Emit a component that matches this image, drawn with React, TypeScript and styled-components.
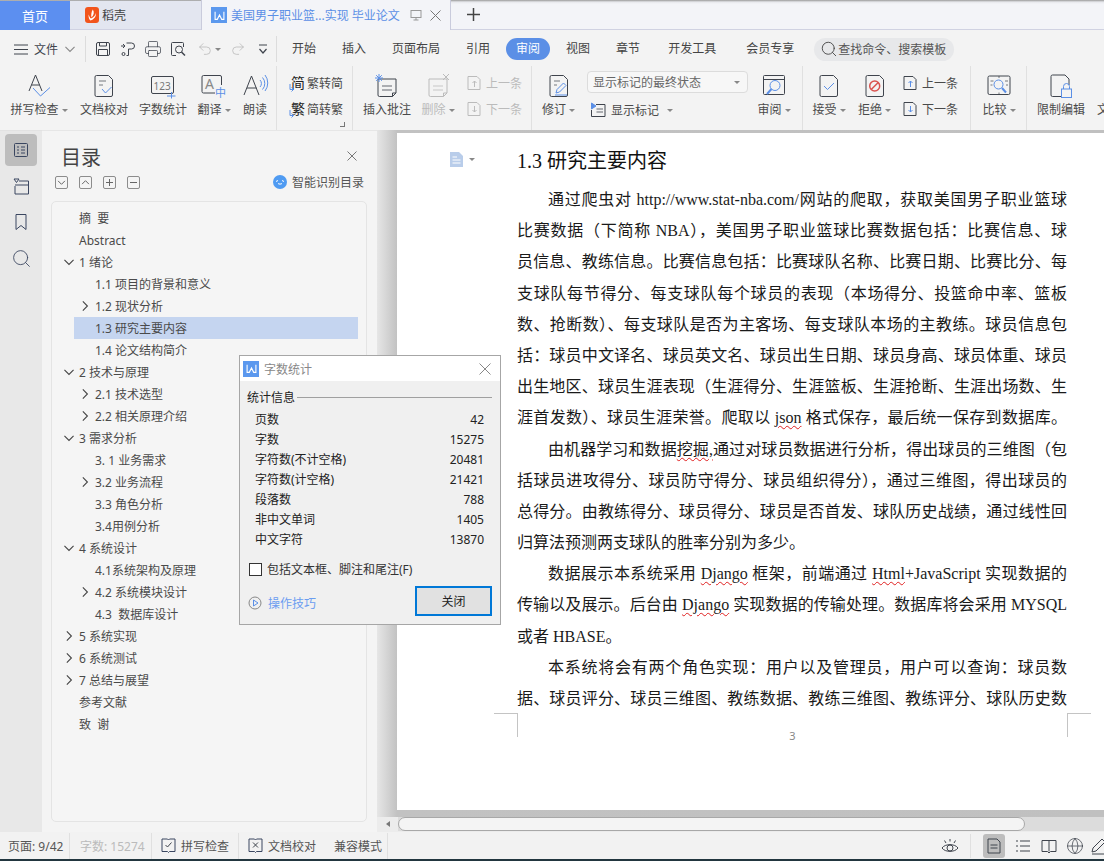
import React from "react";
import styled, { createGlobalStyle } from "styled-components";
import { Globe, Printer, Redo2, Search, Undo2 } from "lucide-react";

const INK = "#3f444d";
const BLUE = "#5b8fe6";
const UI_FONT = `"Noto Sans", "Noto Sans CJK SC", sans-serif`;

const GlobalStyle = createGlobalStyle`
  html, body { margin: 0; padding: 0; background: #f3f3f3; }
  * { box-sizing: border-box; }
`;

const Screen = styled.div`
  position: relative;
  width: 1104px;
  height: 861px;
  overflow: hidden;
  display: flex;
  flex-direction: column;
  font-family: ${UI_FONT};
  font-size: 12px;
  color: #4a4a4a;
  background: #f3f3f3;
`;

/* ---------- tabs ---------- */

const TabBar = styled.div`
  display: flex;
  height: 30px;
  flex-shrink: 0;
  background: linear-gradient(#9a9a9a 0, #e6e7ec 2px, #f3f4f8 4px);
  border-bottom: 1px solid #d0d2e2;
`;

const HomeTab = styled.div`
  width: 70px;
  display: flex;
  align-items: center;
  justify-content: center;
  color: #fff;
  font-size: 13px;
  background: #5c8ff0;
  margin-top: 1px;
  margin-bottom: -1px;
`;

const ShellTab = styled.div`
  width: 131px;
  display: flex;
  align-items: center;
  gap: 3px;
  padding-left: 15px;
  background: #e3e6f0;
  color: #444;
  font-size: 12px;
  margin-top: 1px;
`;

const DocTab = styled.div`
  width: 250px;
  display: flex;
  align-items: center;
  padding-left: 9px;
  margin-bottom: -1px;
  background: #f3f4f8;
  border-left: 1px solid #c9cbdc;
  border-right: 1px solid #c9cbdc;
`;

const DocTabTitle = styled.span`
  margin: 0 9px 0 4px;
  width: 170px;
  color: #5b8fe6;
  font-size: 12px;
  white-space: nowrap;
`;

const NewTab = styled.div`
  margin-left: 16px;
  display: flex;
  align-items: center;
  color: #444;
`;

const WordBadge = styled.span<{ $size: number }>`
  width: ${(p) => p.$size}px;
  height: ${(p) => p.$size}px;
  flex-shrink: 0;
  display: flex;
  align-items: center;
  justify-content: center;
  background: #5b98ee;
`;

/* ---------- menu row ---------- */

const MenuRow = styled.div`
  display: flex;
  align-items: center;
  height: 36px;
  flex-shrink: 0;
  padding: 2px 0 0 14px;
  background: #f3f3f3;
`;

const Slot = styled.span<{ $ml?: number }>`
  display: flex;
  align-items: center;
  flex-shrink: 0;
  margin-left: ${(p) => p.$ml ?? 0}px;
  color: ${INK};
`;

const MenuDivider = styled.span<{ $ml: number }>`
  width: 1px;
  height: 26px;
  margin-left: ${(p) => p.$ml}px;
  background: #dcdcdc;
`;

const MenuTab = styled.span<{ $active?: boolean; $wide?: boolean }>`
  height: 22px;
  line-height: 22px;
  padding: 0 ${(p) => (p.$active ? 10 : p.$wide ? 15 : 13)}px;
  margin: 0 ${(p) => (p.$active ? 3 : 0)}px;
  border-radius: 11px;
  white-space: nowrap;
  color: ${(p) => (p.$active ? "#fff" : "#444")};
  background: ${(p) => (p.$active ? BLUE : "transparent")};
`;

const SearchPill = styled.div`
  display: flex;
  align-items: center;
  width: 140px;
  height: 23px;
  margin-left: 5px;
  padding-left: 6px;
  border-radius: 12px;
  background: #e7e8ea;
  color: #555;
`;

/* ---------- ribbon ---------- */

const Ribbon = styled.div`
  display: flex;
  height: 64px;
  flex-shrink: 0;
  background: #f3f3f3;
  overflow: hidden;
`;

const Group = styled.div<{ $w: number; $pl?: number; $open?: boolean }>`
  display: flex;
  width: ${(p) => p.$w}px;
  flex-shrink: 0;
  padding: 4px 0 0 ${(p) => p.$pl ?? 0}px;
  border-right: ${(p) => (p.$open ? "none" : "1px solid #e0e0e0")};
  position: relative;
`;

const BigButton = styled.div<{ $w: number; $off?: boolean; $ml?: number }>`
  width: ${(p) => p.$w}px;
  margin-left: ${(p) => p.$ml ?? 0}px;
  flex-shrink: 0;
  display: flex;
  flex-direction: column;
  align-items: center;
  color: ${(p) => (p.$off ? "#bbb" : "#4a4a4a")};
`;

const IconBox = styled.div`
  height: 31px;
  display: flex;
  align-items: center;
  justify-content: center;
`;

const Label = styled.div`
  height: 18px;
  line-height: 18px;
  display: flex;
  align-items: center;
  white-space: nowrap;
`;

const Caret = styled.span<{ $ml?: number }>`
  width: 0;
  height: 0;
  margin-left: ${(p) => p.$ml ?? 3}px;
  border-left: 3px solid transparent;
  border-right: 3px solid transparent;
  border-top: 3px solid #888;
`;

const SmallStack = styled.div<{ $ml?: number }>`
  display: flex;
  flex-direction: column;
  gap: 8px;
  margin-top: 4px;
  margin-left: ${(p) => p.$ml ?? 0}px;
  flex-shrink: 0;
`;

const SmallButton = styled.div<{ $off?: boolean; $gap?: number }>`
  height: 18px;
  display: flex;
  align-items: center;
  gap: ${(p) => p.$gap ?? 4}px;
  white-space: nowrap;
  color: ${(p) => (p.$off ? "#bbb" : "#4a4a4a")};
`;

const CornerMark = styled.span`
  position: absolute;
  right: 7px;
  bottom: 3px;
  width: 5px;
  height: 5px;
  border-right: 1px solid #777;
  border-bottom: 1px solid #777;
`;

const MarkSelect = styled.div`
  width: 161px;
  height: 22px;
  margin-top: 1px;
  display: flex;
  align-items: center;
  justify-content: space-between;
  padding: 0 7px 0 5px;
  background: #f7f7f7;
  border: 1px solid #dcdcdc;
  border-radius: 4px;
  color: #666;
`;

const ColumnStack = styled.div`
  display: flex;
  flex-direction: column;
  gap: 8px;
  margin-left: 8px;
  flex-shrink: 0;
`;

/* ---------- body ---------- */

const Body = styled.div`
  flex: 1;
  display: flex;
  min-height: 0;
`;

const Rail = styled.div`
  width: 42px;
  flex-shrink: 0;
  display: flex;
  flex-direction: column;
  align-items: center;
  padding-top: 3px;
  gap: 4px;
  background: #e8e8e8;
  border-top: 1px solid #e2e2e2;
`;

const RailButton = styled.div<{ $active?: boolean }>`
  width: 32px;
  height: 32px;
  display: flex;
  align-items: center;
  justify-content: center;
  border-radius: 4px;
  background: ${(p) => (p.$active ? "#bdbdbd" : "transparent")};
`;

const Panel = styled.div`
  width: 335px;
  flex-shrink: 0;
  display: flex;
  flex-direction: column;
  background: #f4f4f4;
  border-top: 1px solid #e6e6e6;
`;

const PanelHeader = styled.div`
  display: flex;
  align-items: center;
  justify-content: space-between;
  height: 24px;
  margin-top: 13px;
  padding: 0 20px 0 19px;
`;

const PanelTitle = styled.h2`
  margin: 0;
  font-size: 20px;
  font-weight: 400;
  color: #444;
`;

const PanelTools = styled.div`
  display: flex;
  align-items: center;
  justify-content: space-between;
  height: 14px;
  margin-top: 7px;
  padding: 0 13px 0 13px;
`;

const ToolGroup = styled.div`
  display: flex;
  gap: 11px;
`;

const ToolButton = styled.span`
  width: 13px;
  height: 13px;
  display: flex;
  align-items: center;
  justify-content: center;
  border: 1px solid #8c8c8c;
  border-radius: 2px;
`;

const SmartLink = styled.span`
  display: flex;
  align-items: center;
  gap: 5px;
  color: #555;
`;

const TreeBox = styled.div`
  flex: 1;
  margin: 12px 10px 10px 9px;
  padding-top: 5px;
  background: #f5f5f5;
  border: 1px solid #e4e4e4;
  border-radius: 5px;
`;

const TreeRow = styled.div<{ $level: number; $active?: boolean }>`
  height: 22px;
  display: flex;
  align-items: center;
  margin: 0 8px 0 22px;
  padding-left: ${(p) => (p.$level === 1 ? 5 : 21)}px;
  white-space: pre;
  color: #4a4a4a;
  background: ${(p) => (p.$active ? "#c5d5f0" : "transparent")};
`;

const TreeArrow = styled.span<{ $level: number }>`
  width: 12px;
  margin-left: -16px;
  margin-right: 4px;
  display: flex;
`;

/* ---------- document ---------- */

const DocColumn = styled.div`
  flex: 1;
  min-width: 0;
  display: flex;
  flex-direction: column;
`;

const DocArea = styled.div`
  flex: 1;
  min-height: 0;
  padding: 3px 0 7px 20px;
  display: flex;
  background: linear-gradient(90deg, #e6e6e6 0, #c2c2c2 20px, #c0c0c0 100%);
`;

const Page = styled.div`
  flex: 1;
  padding-top: 11px;
  overflow: hidden;
  background: #fff;
`;

const HeadingRow = styled.div`
  display: flex;
  align-items: center;
  height: 30px;
`;

const MarginMark = styled.div`
  width: 120px;
  display: flex;
  align-items: center;
  gap: 6px;
  padding-left: 53px;
`;

const Heading = styled.h1`
  margin: 0;
  font-family: "Liberation Serif", "Noto Sans CJK SC", serif;
  font-size: 20px;
  font-weight: 400;
  color: #111;
`;

const DocBody = styled.div`
  margin-top: 10px;
  padding: 0 37px 0 120px;
  font-family: "Liberation Serif", "Noto Sans CJK SC", serif;
  font-size: 16px;
  line-height: 31.2px;
  color: #1a1a1a;
`;

const DocLine = styled.p<{ $indent?: boolean; $left?: boolean }>`
  margin: 0;
  height: 31.2px;
  text-indent: ${(p) => (p.$indent ? "31px" : 0)};
  text-align: ${(p) => (p.$left ? "left" : "justify")};
  text-align-last: ${(p) => (p.$left ? "left" : "justify")};
`;

const Wavy = styled.span`
  text-decoration: underline wavy #e02020 1px;
  text-underline-offset: 2px;
`;

const PageFoot = styled.div`
  display: flex;
  justify-content: space-between;
  margin-top: -1px;
  padding: 0 13px 0 97px;
`;

const CropMark = styled.span<{ $side: "left" | "right" }>`
  width: 24px;
  height: 24px;
  border-top: 1px solid #c4c4c4;
  border-${(p) => (p.$side === "left" ? "right" : "left")}: 1px solid #c4c4c4;
`;

const PageNumber = styled.span`
  align-self: flex-end;
  font-size: 11px;
  line-height: 12px;
  margin-bottom: -5px;
  color: #888;
`;

const ScrollRow = styled.div`
  height: 15px;
  flex-shrink: 0;
  display: flex;
  background: #dcdcdc;
  border-bottom: 1px solid #ececec;
`;

const ScrollArrow = styled.div`
  width: 21px;
  display: flex;
  align-items: center;
  justify-content: center;
  background: #ececec;
`;

const ArrowLeft = styled.span`
  width: 0;
  height: 0;
  border-top: 3px solid transparent;
  border-bottom: 3px solid transparent;
  border-right: 4px solid #777;
`;

const ScrollThumb = styled.div`
  width: 627px;
  background: #f4f4f4;
  border: 1px solid #a8a8a8;
  border-radius: 8px;
`;

/* ---------- status bar ---------- */

const StatusBar = styled.div`
  height: 29px;
  flex-shrink: 0;
  display: flex;
  align-items: center;
  background: #f2f2f2;
  border-bottom: 2px solid #22363f;
  color: #555;
`;

const StatusItem = styled.div<{ $w: number; $pl: number; $line?: boolean; $muted?: boolean }>`
  width: ${(p) => p.$w}px;
  height: 26px;
  display: flex;
  align-items: center;
  gap: 5px;
  padding-left: ${(p) => p.$pl}px;
  white-space: nowrap;
  border-right: ${(p) => (p.$line ? "1px solid #e0e0e0" : "none")};
  color: ${(p) => (p.$muted ? "#bbb" : "#555")};
`;

const StatusRight = styled.div`
  margin-left: auto;
  margin-right: -8px;
  display: flex;
  align-items: center;
  height: 26px;
`;

const ViewButton = styled.div<{ $active?: boolean; $w?: number }>`
  width: ${(p) => p.$w ?? 26}px;
  height: 24px;
  display: flex;
  align-items: center;
  justify-content: center;
  border-radius: 3px;
  color: ${INK};
  background: ${(p) => (p.$active ? "#bdbdbd" : "transparent")};
`;

const StatusLine = styled.span`
  width: 1px;
  height: 24px;
  margin: 0 12px 0 11px;
  background: #e0e0e0;
`;

/* ---------- word count dialog ---------- */

const Dialog = styled.div`
  position: absolute;
  left: 239px;
  top: 355px;
  width: 262px;
  height: 270px;
  display: flex;
  flex-direction: column;
  background: #f0f0f0;
  border: 1px solid #a6a6a6;
  color: #333;
`;

const DialogTitleBar = styled.div`
  height: 25px;
  display: flex;
  align-items: center;
  gap: 5px;
  padding: 0 9px 0 3px;
  background: #fff;
  color: #888;
`;

const DialogTitleText = styled.span`
  flex: 1;
`;

const DialogBody = styled.div`
  flex: 1;
  padding: 8px 8px 0 7px;
  display: flex;
  flex-direction: column;
`;

const SectionHead = styled.div`
  display: flex;
  align-items: center;
  gap: 2px;
  height: 16px;
  color: #222;
`;

const SectionRule = styled.span`
  flex: 1;
  height: 1px;
  background: #a0a0a0;
`;

const StatList = styled.div`
  margin-top: 4px;
  padding: 0 8px;
`;

const StatRow = styled.div`
  height: 20px;
  display: flex;
  align-items: center;
  justify-content: space-between;
  color: #222;
`;

const CheckRow = styled.label`
  display: flex;
  align-items: center;
  gap: 5px;
  height: 16px;
  margin: 12px 0 0 2px;
  color: #333;
`;

const CheckBox = styled.span`
  width: 13px;
  height: 13px;
  background: #fff;
  border: 1px solid #333;
`;

const DialogFoot = styled.div`
  display: flex;
  align-items: center;
  justify-content: space-between;
  margin-top: 9px;
  padding-left: 1px;
`;

const TipLink = styled.span`
  display: flex;
  align-items: center;
  gap: 6px;
  padding-top: 4px;
  color: #6b9df0;
`;

const CloseButton = styled.div`
  width: 77px;
  height: 30px;
  display: flex;
  align-items: center;
  justify-content: center;
  background: #e1e1e1;
  border: 2px solid #0078d7;
  color: #222;
`;

/* ---------- drawings ---------- */

const SHEET = "M4.5 1.5H16.5L20.5 5.5V21a1.5 1.5 0 0 1-1.5 1.5H4.5A1.5 1.5 0 0 1 3 21V3A1.5 1.5 0 0 1 4.5 1.5Z";

const Svg = ({ size = 24, h, children }: { size?: number; h?: number; children: React.ReactNode }) => (
  <svg width={size} height={h ?? size} viewBox={`0 0 ${size} ${h ?? size}`} fill="none" stroke={INK} strokeWidth="1">
    {children}
  </svg>
);

const Cross = ({ size, color }: { size: number; color: string }) => (
  <Svg size={size}>
    <path d={`M.5 .5L${size - 0.5} ${size - 0.5}M${size - 0.5} .5L.5 ${size - 0.5}`} stroke={color} />
  </Svg>
);

const PlusMark = ({ size, color, width = 1 }: { size: number; color: string; width?: number }) => (
  <svg width={size} height={size} viewBox={`0 0 ${size} ${size}`} fill="none" stroke={color} strokeWidth={width}>
    <path d={`M0 ${size / 2}H${size}M${size / 2} 0V${size}`} />
  </svg>
);

const Chevron = ({ size = 12, dir, color = "#444", width = 1.1 }: { size?: number; dir: "down" | "up" | "right"; color?: string; width?: number }) => {
  const s = size;
  const d =
    dir === "down"
      ? `M${s * 0.12} ${s * 0.32}L${s * 0.5} ${s * 0.7}L${s * 0.88} ${s * 0.32}`
      : dir === "up"
        ? `M${s * 0.12} ${s * 0.68}L${s * 0.5} ${s * 0.3}L${s * 0.88} ${s * 0.68}`
        : `M${s * 0.32} ${s * 0.12}L${s * 0.7} ${s * 0.5}L${s * 0.32} ${s * 0.88}`;
  return (
    <svg width={s} height={s} viewBox={`0 0 ${s} ${s}`} fill="none" stroke={color} strokeWidth={width}>
      <path d={d} />
    </svg>
  );
};

const WordMark = ({ size }: { size: number }) => (
  <WordBadge $size={size}>
    <svg width={size - 5} height={size - 5} viewBox="0 0 10 10" fill="none" stroke="#fff" strokeWidth="1">
      <path d="M1 1.5V8.5H3L5 4.5L7 8.5H9V1.5" />
    </svg>
  </WordBadge>
);

const ShellLogo = () => (
  <svg width="14" height="16" viewBox="0 0 14 16">
    <rect width="14" height="16" rx="3" fill="#f2541b" />
    <path d="M7.8 2.5C9.5 5 9 8 6.5 10.5 6 8.5 6.2 5 7.8 2.5ZM11 6c.2 3.5-2 6.5-5.5 7.5C4 12.5 3.3 10 3.6 7.5 4.3 9.5 5 10.8 6 11.6 8.8 10.5 10.3 8.5 11 6Z" fill="#fff" />
  </svg>
);

const SpellIcon = () => (
  <Svg size={26}>
    <path d="M3 18L9.5 2L16 18M5.5 12H13.5" />
    <path d="M7 15L14.5 23L24 14.5" stroke={BLUE} />
  </Svg>
);

const ProofIcon = () => (
  <Svg>
    <path d={SHEET} />
    <path d="M7 7H14M7 11H11" strokeOpacity=".7" />
    <path d="M10 15L13.5 19L19.5 13" stroke={BLUE} />
  </Svg>
);

const CountIcon = () => (
  <Svg size={26}>
    <rect x="1.5" y="3.5" width="22" height="17" rx="1.5" />
    <text x="3.5" y="16.5" fontSize="10" fill="#777" stroke="none">123</text>
    <path d="M17 23H25.5M21.5 19V25.5" stroke={BLUE} />
  </Svg>
);

const TranslateIcon = () => (
  <Svg size={28}>
    <path d="M15 21H3.5A1.5 1.5 0 0 1 2 19.5V5A1.5 1.5 0 0 1 3.5 3.5H20A1.5 1.5 0 0 1 21.5 5V13" />
    <text x="5" y="17" fontSize="14" fill="#888" stroke="none">A</text>
    <text x="15" y="25" fontSize="11" fill={BLUE} stroke="none">中</text>
  </Svg>
);

const ReadIcon = () => (
  <Svg size={28}>
    <path d="M3 23L10.5 4L18 23M6 16H15.5" />
    <path d="M19 8a5 5 0 0 1 0 7M21.5 5.5a9 9 0 0 1 0 12M24 3a13 13 0 0 1 0 16" stroke={BLUE} />
  </Svg>
);

const ConvertIcon = ({ glyph }: { glyph: string }) => (
  <Svg size={16} h={18}>
    <text x="2" y="14" fontSize="14" fill="#222" stroke="none">{glyph}</text>
    <path d="M1 10V15.5H4M2.5 13.5L4.5 15.5L2.5 17.5" stroke={BLUE} />
  </Svg>
);

const NoteIcon = ({ color = INK, star, cross }: { color?: string; star?: boolean; cross?: boolean }) => (
  <Svg>
    <path d="M3 5H21V19L17.5 22.5H4.5A1.5 1.5 0 0 1 3 21V5Z" stroke={color} />
    <path d="M21 19H17.5V22.5" stroke={color} />
    <path d="M7 12H17M7 16H17" stroke={color} strokeOpacity=".8" />
    {star && <path d="M4 0V8M0 4H8M1.2 1.2L6.8 6.8M6.8 1.2L1.2 6.8" stroke={BLUE} />}
    {cross && <path d="M17 0L23 6M23 0L17 6" stroke={color} />}
  </Svg>
);

const StepIcon = ({ dir, color = INK, arrow = BLUE }: { dir: "up" | "down"; color?: string; arrow?: string }) => (
  <Svg size={16}>
    <path d="M2 1.5H11L14 4.5V14.5H2Z" stroke={color} />
    <path d={dir === "up" ? "M8.5 12V6M6.5 8L8.5 6L10.5 8" : "M8.5 5V11M6.5 9L8.5 11L10.5 9"} stroke={arrow} />
  </Svg>
);

const ReviseIcon = () => (
  <Svg>
    <path d={SHEET} />
    <path d="M7 7H13M7 11H10" strokeOpacity=".7" />
    <path d="M9 19L10 15.5L16.5 9L19 11.5L12.5 18L9 19ZM8 21H20" stroke={BLUE} />
  </Svg>
);

const FlagNoteIcon = () => (
  <Svg size={16}>
    <path d="M6 2.5H15V14.5H1.5V8" />
    <path d="M6.5 7H13M6.5 10H13" strokeOpacity=".8" />
    <path d="M1.5 1V7L6 4Z" fill={BLUE} stroke={BLUE} />
  </Svg>
);

const ReviewIcon = () => (
  <Svg size={26}>
    <rect x="2.5" y="2.5" width="21" height="19" rx="1" />
    <path d="M2.5 6.5H23.5" />
    <circle cx="14" cy="12.5" r="5" stroke={BLUE} />
    <path d="M10.5 16L6 21" stroke={BLUE} strokeWidth="2" />
  </Svg>
);

const AcceptIcon = () => (
  <Svg>
    <path d={SHEET} />
    <path d="M7 12L10.5 15.5L17 9" stroke={BLUE} />
  </Svg>
);

const RejectIcon = () => (
  <Svg>
    <path d={SHEET} />
    <circle cx="11.7" cy="12" r="5" stroke="#d9534f" strokeWidth="1.5" />
    <path d="M8.2 15.5L15.2 8.5" stroke="#d9534f" strokeWidth="1.5" />
  </Svg>
);

const CompareIcon = () => (
  <Svg size={26}>
    <path d="M13 3H3.5A1.5 1.5 0 0 0 2 4.5V20A1.5 1.5 0 0 0 3.5 21.5H22.5A1.5 1.5 0 0 0 24 20V4.5A1.5 1.5 0 0 0 22.5 3H13Z" />
    <path d="M13 3V5M13 19.5V21.5M4.5 8H7.5M4.5 12H6.5M19 8H22M20 12H22" strokeOpacity=".7" />
    <circle cx="12.5" cy="11.5" r="4.5" stroke={BLUE} />
    <path d="M16 15L20 19.5" stroke={BLUE} strokeWidth="2" />
  </Svg>
);

const LockDocIcon = () => (
  <Svg size={26}>
    <path d="M13 23.5H4.5A1.5 1.5 0 0 1 3 22V3.5A1.5 1.5 0 0 1 4.5 2H17L21 6V12" />
    <rect x="13.5" y="16" width="10" height="8.5" stroke={BLUE} />
    <path d="M15.5 16V13.5a3 3 0 0 1 6 0V16" stroke={BLUE} />
  </Svg>
);

const SaveIcon = () => (
  <Svg size={16}>
    <path d="M3 1.5H13A1.5 1.5 0 0 1 14.5 3V13A1.5 1.5 0 0 1 13 14.5H3A1.5 1.5 0 0 1 1.5 13V3A1.5 1.5 0 0 1 3 1.5Z" />
    <path d="M4.5 2V5H11.5V2M3.5 14V8.5H12.5V14" />
  </Svg>
);

const FormatIcon = () => (
  <Svg size={16}>
    <path d="M6.5 2H11.5A3 3 0 0 1 11.5 8H8.5V14.5H6.5M1 5H5M3 3L5 5L3 7" />
    <circle cx="3.5" cy="13" r="1.5" />
  </Svg>
);

const PreviewIcon = () => (
  <Svg size={16}>
    <path d="M6 14.5H2.5A1 1 0 0 1 1.5 13.5V2.5A1 1 0 0 1 2.5 1.5H12.5A1 1 0 0 1 13.5 2.5V6" />
    <circle cx="9" cy="8.5" r="3.5" />
    <path d="M11.5 11L15 14.5" strokeWidth="1.5" />
  </Svg>
);

const FoldIcon = () => (
  <Svg size={14}>
    <path d="M3 3H11M3.5 7L7 11L10.5 7" strokeWidth="1.2" />
  </Svg>
);

const OutlineIcon = () => (
  <Svg size={18}>
    <rect x="2.5" y="2.5" width="13" height="13" rx="1" stroke="#3a4660" />
    <path d="M5 6H7M9 6H13M5 9H7M9 9H13M5 12H7M9 12H13" stroke="#3a4660" />
  </Svg>
);

const FlagPanelIcon = () => (
  <Svg size={18}>
    <path d="M7 4H16.5V17H3V9" stroke="#3a4660" />
    <path d="M3 8H16.5" stroke="#3a4660" />
    <path d="M2 2H7L4.5 5.5Z" stroke="#3a4660" />
  </Svg>
);

const BookmarkIcon = () => (
  <Svg size={18}>
    <path d="M4 1.5H14V16.5L9 12.5L4 16.5Z" stroke="#3a4660" />
  </Svg>
);

const CloudFace = () => (
  <svg width="14" height="14" viewBox="0 0 14 14">
    <circle cx="7" cy="7" r="7" fill="#4f9bf2" />
    <path d="M3 6.5L5 5.5M9 5.5L11 6.5M5 8.5C6 9.3 8 9.3 9 8.5" stroke="#fff" fill="none" />
  </svg>
);

const FileMarkIcon = () => (
  <svg width="13" height="15" viewBox="0 0 13 15">
    <path d="M0 0H9L13 4V15H0Z" fill="#b9cdea" />
    <path d="M2.5 5H7M2.5 8H10.5M2.5 11H10.5" stroke="#fff" />
  </svg>
);

const PlayIcon = () => (
  <Svg size={14}>
    <circle cx="7" cy="7" r="6" stroke="#888" />
    <path d="M5.5 4V10L10 7Z" stroke={BLUE} />
  </Svg>
);

const CheckBadge = ({ mark }: { mark: "check" | "cross" }) => (
  <Svg size={15}>
    <path d="M1 1H6.5L7.5 2L8.5 1H14V13.5H8.5L7.5 14.5L6.5 13.5H1Z" stroke="#3a4660" />
    {mark === "check" ? <path d="M4.5 7L6.5 9L10.5 4.5" /> : <path d="M5 4.5L10 9.5M10 4.5L5 9.5" />}
  </Svg>
);

const EyeIcon = () => (
  <Svg size={18}>
    <path d="M1 11C4 6.5 14 6.5 17 11C14 15.5 4 15.5 1 11Z" />
    <circle cx="9" cy="11" r="3" />
    <path d="M9 2V4.5M3.5 3.5L5 6M14.5 3.5L13 6" />
  </Svg>
);

const PageViewIcon = () => (
  <Svg size={16}>
    <path d="M2 1H11L14 4V15H2Z" />
    <path d="M4.5 7H11.5M4.5 10H11.5" />
  </Svg>
);

const OutlineViewIcon = () => (
  <Svg size={16}>
    <path d="M1 3H3M5 3H15M1 8H3M5 8H15M1 13H3M5 13H15" />
  </Svg>
);

const BookViewIcon = () => (
  <Svg size={16}>
    <path d="M8 2.5H1V13.5H6.5L8 15L9.5 13.5H15V2.5H8ZM8 2.5V13.5" />
  </Svg>
);

const PenIcon = () => (
  <Svg size={18}>
    <path d="M1 15L2 11L11 2L14 5L5 14ZM1 17H17" />
  </Svg>
);

/* ---------- content ---------- */

type TocItem = { text: string; level: 1 | 2; arrow?: "down" | "right"; active?: boolean };

const TOC: TocItem[] = [
  { text: "摘  要", level: 1 },
  { text: "Abstract", level: 1 },
  { text: "1 绪论", level: 1, arrow: "down" },
  { text: "1.1 项目的背景和意义", level: 2 },
  { text: "1.2 现状分析", level: 2, arrow: "right" },
  { text: "1.3 研究主要内容", level: 2, active: true },
  { text: "1.4 论文结构简介", level: 2 },
  { text: "2 技术与原理", level: 1, arrow: "down" },
  { text: "2.1 技术选型", level: 2, arrow: "right" },
  { text: "2.2 相关原理介绍", level: 2, arrow: "right" },
  { text: "3 需求分析", level: 1, arrow: "down" },
  { text: "3. 1 业务需求", level: 2 },
  { text: "3.2 业务流程", level: 2, arrow: "right" },
  { text: "3.3 角色分析", level: 2 },
  { text: "3.4用例分析", level: 2 },
  { text: "4 系统设计", level: 1, arrow: "down" },
  { text: "4.1系统架构及原理", level: 2 },
  { text: "4.2 系统模块设计", level: 2, arrow: "right" },
  { text: "4.3  数据库设计", level: 2 },
  { text: "5 系统实现", level: 1, arrow: "right" },
  { text: "6 系统测试", level: 1, arrow: "right" },
  { text: "7 总结与展望", level: 1, arrow: "right" },
  { text: "参考文献", level: 1 },
  { text: "致  谢", level: 1 },
];

const STATS = [
  ["页数", "42"],
  ["字数", "15275"],
  ["字符数(不计空格)", "20481"],
  ["字符数(计空格)", "21421"],
  ["段落数", "788"],
  ["非中文单词", "1405"],
  ["中文字符", "13870"],
];

const TABS: { text: string; active?: boolean; wide?: boolean }[] = [
  { text: "开始" },
  { text: "插入" },
  { text: "页面布局" },
  { text: "引用" },
  { text: "审阅", active: true },
  { text: "视图" },
  { text: "章节" },
  { text: "开发工具", wide: true },
  { text: "会员专享", wide: true },
];

export default function App() {
  return (
    <Screen>
      <GlobalStyle />
      <TabBar>
        <HomeTab>首页</HomeTab>
        <ShellTab>
          <ShellLogo />
          稻壳
        </ShellTab>
        <DocTab>
          <WordMark size={16} />
          <DocTabTitle>美国男子职业篮...实现 毕业论文</DocTabTitle>
          <Svg size={12}>
            <rect x="1" y="1.5" width="10" height="7" stroke="#999" />
            <path d="M6 8.5V11M3.5 11H8.5" stroke="#999" />
          </Svg>
          <Slot $ml={8}><Cross size={11} color="#777" /></Slot>
        </DocTab>
        <NewTab><PlusMark size={13} color="#444" width={1.5} /></NewTab>
      </TabBar>

      <MenuRow>
        <Slot>
          <Svg size={14}>
            <path d="M0 3H14M0 7.5H14M0 12H14" />
          </Svg>
        </Slot>
        <Slot $ml={6}>文件</Slot>
        <Slot $ml={6}><Chevron size={12} dir="down" color="#888" /></Slot>
        <MenuDivider $ml={9} />
        <Slot $ml={9}><SaveIcon /></Slot>
        <Slot $ml={9}><FormatIcon /></Slot>
        <Slot $ml={8}><Printer size={18} strokeWidth={1} /></Slot>
        <Slot $ml={8}><PreviewIcon /></Slot>
        <Slot $ml={11}><Undo2 size={16} color="#b5b5b5" strokeWidth={1.1} /></Slot>
        <Caret $ml={2} />
        <Slot $ml={9}><Redo2 size={16} color="#b5b5b5" strokeWidth={1.1} /></Slot>
        <Slot $ml={10}><FoldIcon /></Slot>
        <MenuDivider $ml={6} />
        <Slot $ml={2} />
        {TABS.map((t) => (
          <MenuTab key={t.text} $active={t.active} $wide={t.wide}>{t.text}</MenuTab>
        ))}
        <SearchPill>
          <Search size={18} strokeWidth={1.2} color="#444" />
          查找命令、搜索模板
        </SearchPill>
      </MenuRow>

      <Ribbon>
        <Group $w={277} $pl={6}>
          <BigButton $w={66}>
            <IconBox><SpellIcon /></IconBox>
            <Label>拼写检查<Caret /></Label>
          </BigButton>
          <BigButton $w={64}>
            <IconBox><ProofIcon /></IconBox>
            <Label>文档校对</Label>
          </BigButton>
          <BigButton $w={54}>
            <IconBox><CountIcon /></IconBox>
            <Label>字数统计</Label>
          </BigButton>
          <BigButton $w={48}>
            <IconBox><TranslateIcon /></IconBox>
            <Label>翻译<Caret /></Label>
          </BigButton>
          <BigButton $w={34}>
            <IconBox><ReadIcon /></IconBox>
            <Label>朗读</Label>
          </BigButton>
        </Group>
        <Group $w={76} $pl={12}>
          <SmallStack>
            <SmallButton $gap={2}><ConvertIcon glyph="简" />繁转简</SmallButton>
            <SmallButton $gap={2}><ConvertIcon glyph="繁" />简转繁</SmallButton>
          </SmallStack>
          <CornerMark />
        </Group>
        <Group $w={179} $pl={6}>
          <BigButton $w={56}>
            <IconBox><NoteIcon star /></IconBox>
            <Label>插入批注</Label>
          </BigButton>
          <BigButton $w={46} $off>
            <IconBox><NoteIcon color="#bbb" cross /></IconBox>
            <Label>删除<Caret /></Label>
          </BigButton>
          <SmallStack $ml={5}>
            <SmallButton $off><StepIcon dir="up" color="#bbb" arrow="#bbb" />上一条</SmallButton>
            <SmallButton $off><StepIcon dir="down" color="#bbb" arrow="#bbb" />下一条</SmallButton>
          </SmallStack>
        </Group>
        <Group $w={271} $pl={6}>
          <BigButton $w={41}>
            <IconBox><ReviseIcon /></IconBox>
            <Label>修订<Caret /></Label>
          </BigButton>
          <ColumnStack>
            <MarkSelect>显示标记的最终状态<Caret /></MarkSelect>
            <SmallButton $gap={5}>
              <Slot $ml={3}><FlagNoteIcon /></Slot>
              显示标记<Caret />
            </SmallButton>
          </ColumnStack>
          <BigButton $w={52}>
            <IconBox><ReviewIcon /></IconBox>
            <Label>审阅<Caret /></Label>
          </BigButton>
        </Group>
        <Group $w={168} $pl={3}>
          <BigButton $w={46}>
            <IconBox><AcceptIcon /></IconBox>
            <Label>接受<Caret /></Label>
          </BigButton>
          <BigButton $w={45}>
            <IconBox><RejectIcon /></IconBox>
            <Label>拒绝<Caret /></Label>
          </BigButton>
          <SmallStack $ml={5}>
            <SmallButton><StepIcon dir="up" />上一条</SmallButton>
            <SmallButton><StepIcon dir="down" />下一条</SmallButton>
          </SmallStack>
        </Group>
        <Group $w={56} $pl={6}>
          <BigButton $w={44}>
            <IconBox><CompareIcon /></IconBox>
            <Label>比较<Caret /></Label>
          </BigButton>
        </Group>
        <Group $w={77} $pl={6} $open>
          <BigButton $w={56}>
            <IconBox><LockDocIcon /></IconBox>
            <Label>限制编辑</Label>
          </BigButton>
          <BigButton $w={12} $ml={8}>
            <IconBox />
            <Label>文</Label>
          </BigButton>
        </Group>
      </Ribbon>

      <Body>
        <Rail>
          <RailButton $active><OutlineIcon /></RailButton>
          <RailButton><FlagPanelIcon /></RailButton>
          <RailButton><BookmarkIcon /></RailButton>
          <RailButton><Search size={21} color="#3a4660" strokeWidth={1} /></RailButton>
        </Rail>

        <Panel>
          <PanelHeader>
            <PanelTitle>目录</PanelTitle>
            <Cross size={10} color="#777" />
          </PanelHeader>
          <PanelTools>
            <ToolGroup>
              <ToolButton><Chevron size={9} dir="down" color="#666" width={1} /></ToolButton>
              <ToolButton><Chevron size={9} dir="up" color="#666" width={1} /></ToolButton>
              <ToolButton><PlusMark size={7} color="#666" /></ToolButton>
              <ToolButton>
                <Svg size={7}><path d="M0 3.5H7" stroke="#666" /></Svg>
              </ToolButton>
            </ToolGroup>
            <SmartLink><CloudFace />智能识别目录</SmartLink>
          </PanelTools>
          <TreeBox>
            {TOC.map((item) => (
              <TreeRow key={item.text} $level={item.level} $active={item.active}>
                {item.arrow && (
                  <TreeArrow $level={item.level}>
                    <Chevron dir={item.arrow} />
                  </TreeArrow>
                )}
                {item.text}
              </TreeRow>
            ))}
          </TreeBox>
        </Panel>

        <DocColumn>
          <DocArea>
            <Page>
              <HeadingRow>
                <MarginMark>
                  <FileMarkIcon />
                  <Caret $ml={0} />
                </MarginMark>
                <Heading>1.3 研究主要内容</Heading>
              </HeadingRow>
              <DocBody>
                <DocLine $indent>通过爬虫对 http://www.stat-nba.com/网站的爬取，获取美国男子职业篮球</DocLine>
                <DocLine>比赛数据（下简称 NBA），美国男子职业篮球比赛数据包括：比赛信息、球</DocLine>
                <DocLine>员信息、教练信息。比赛信息包括：比赛球队名称、比赛日期、比赛比分、每</DocLine>
                <DocLine>支球队每节得分、每支球队每个球员的表现（本场得分、投篮命中率、篮板</DocLine>
                <DocLine>数、抢断数）、每支球队是否为主客场、每支球队本场的主教练。球员信息包</DocLine>
                <DocLine>括：球员中文译名、球员英文名、球员出生日期、球员身高、球员体重、球员</DocLine>
                <DocLine>出生地区、球员生涯表现（生涯得分、生涯篮板、生涯抢断、生涯出场数、生</DocLine>
                <DocLine>涯首发数）、球员生涯荣誉。爬取以 <Wavy>json</Wavy> 格式保存，最后统一保存到数据库。</DocLine>
                <DocLine $indent>由机器学习和数据<Wavy>挖掘,</Wavy>通过对球员数据进行分析，得出球员的三维图（包</DocLine>
                <DocLine>括球员进攻得分、球员防守得分、球员组织得分），通过三维图，得出球员的</DocLine>
                <DocLine>总得分。由教练得分、球员得分、球员是否首发、球队历史战绩，通过线性回</DocLine>
                <DocLine $left>归算法预测两支球队的胜率分别为多少。</DocLine>
                <DocLine $indent>数据展示本系统采用 <Wavy>Django</Wavy> 框架，前端通过 <Wavy>Html</Wavy>+JavaScript 实现数据的</DocLine>
                <DocLine>传输以及展示。后台由 <Wavy>Django</Wavy> 实现数据的传输处理。数据库将会采用 MYSQL</DocLine>
                <DocLine $left>或者 HBASE。</DocLine>
                <DocLine $indent>本系统将会有两个角色实现：用户以及管理员，用户可以查询：球员数</DocLine>
                <DocLine>据、球员评分、球员三维图、教练数据、教练三维图、教练评分、球队历史数</DocLine>
              </DocBody>
              <PageFoot>
                <CropMark $side="left" />
                <PageNumber>3</PageNumber>
                <CropMark $side="right" />
              </PageFoot>
            </Page>
          </DocArea>
          <ScrollRow>
            <ScrollArrow><ArrowLeft /></ScrollArrow>
            <ScrollThumb />
          </ScrollRow>
        </DocColumn>
      </Body>

      <StatusBar>
        <StatusItem $w={70} $pl={8} $line>页面: 9/42</StatusItem>
        <StatusItem $w={82} $pl={10} $line $muted>字数: 15274</StatusItem>
        <StatusItem $w={87} $pl={9} $line><CheckBadge mark="check" />拼写检查</StatusItem>
        <StatusItem $w={95} $pl={9}><CheckBadge mark="cross" />文档校对</StatusItem>
        <StatusItem $w={54} $pl={0} $line>兼容模式</StatusItem>
        <StatusRight>
          <ViewButton $w={18}><EyeIcon /></ViewButton>
          <StatusLine />
          <ViewButton $active $w={22}><PageViewIcon /></ViewButton>
          <Slot $ml={5} />
          <ViewButton><OutlineViewIcon /></ViewButton>
          <ViewButton><BookViewIcon /></ViewButton>
          <ViewButton><Globe size={18} strokeWidth={1} /></ViewButton>
          <ViewButton $w={24}><PenIcon /></ViewButton>
        </StatusRight>
      </StatusBar>

      <Dialog>
        <DialogTitleBar>
          <WordMark size={16} />
          <DialogTitleText>字数统计</DialogTitleText>
          <Cross size={12} color="#888" />
        </DialogTitleBar>
        <DialogBody>
          <SectionHead>统计信息<SectionRule /></SectionHead>
          <StatList>
            {STATS.map(([name, value]) => (
              <StatRow key={name}>
                <span>{name}</span>
                <span>{value}</span>
              </StatRow>
            ))}
          </StatList>
          <CheckRow>
            <CheckBox />
            包括文本框、脚注和尾注(F)
          </CheckRow>
          <DialogFoot>
            <TipLink><PlayIcon />操作技巧</TipLink>
            <CloseButton>关闭</CloseButton>
          </DialogFoot>
        </DialogBody>
      </Dialog>
    </Screen>
  );
}
